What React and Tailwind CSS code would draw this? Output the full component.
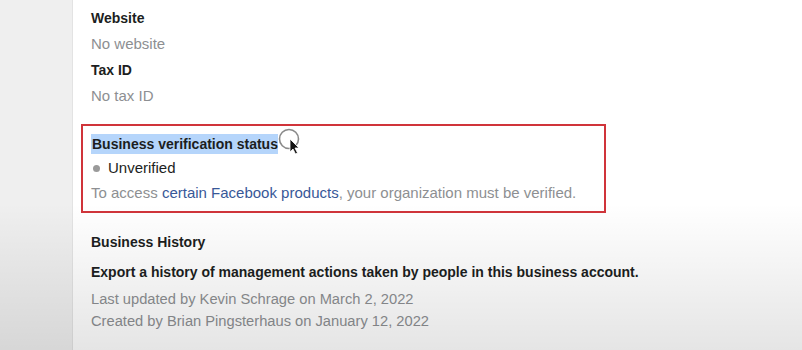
import React from "react";

function Cursor() {
    return (
        <svg
            width="30"
            height="34"
            viewBox="0 0 30 34"
            className="absolute left-[277px] top-[127px]"
        >
            <circle cx="12" cy="12" r="9.5" fill="rgba(255,255,255,0.55)" stroke="#8a8a8a" strokeWidth="1.6" />
            <path d="M13 12 L13 25 L16 22 L18.5 27 L20.5 26 L18 21 L22 21 Z" fill="#111" stroke="#fff" strokeWidth="0.8" />
        </svg>
    );
}

export default function App() {
    return (
        <div className="relative flex w-[802px] h-[350px] overflow-hidden bg-white font-['Liberation_Sans',Arial,sans-serif]">
            <div className="w-[73px] shrink-0 bg-[#efefef] border-r border-[#e3e3e3]" />

            <div className="flex-1 pl-[8px]">
                <div className="mt-[-21px] h-[26px] pl-[10px] flex items-center text-[15px] text-[#8d8f92]">
                    No phone number
                </div>
                <div className="h-[26px] pl-[10px] flex items-center text-[14px] font-bold text-[#1c1e21]">
                    Website
                </div>
                <div className="h-[26px] pl-[10px] flex items-center text-[15px] text-[#8d8f92]">
                    No website
                </div>
                <div className="h-[26px] pl-[10px] flex items-center text-[14px] font-bold text-[#1c1e21]">
                    Tax ID
                </div>
                <div className="h-[26px] pl-[10px] flex items-center text-[15px] text-[#8d8f92]">
                    No tax ID
                </div>

                <div className="mt-[15px] w-[525px] border-2 border-[#d0343a] pl-[8px] pt-[5px] pb-[5px]">
                    <div className="h-[25px] flex items-center">
                        <span className="bg-[#b5d5fb] text-[14px] font-bold text-[#1c1e21] leading-[20px] pl-[1px]">
                            Business verification status
                        </span>
                    </div>
                    <div className="h-[25px] flex items-center gap-[8px] text-[15px] text-[#1c1e21]">
                        <span className="ml-[2px] w-[7px] h-[7px] rounded-full bg-[#9a9a9a]" />
                        <span>Unverified</span>
                    </div>
                    <div className="h-[25px] flex items-center text-[15px] text-[#8d8f92]">
                        <span>
                            To access{" "}
                            <span className="text-[#385898]">
                                certain Facebook products
                            </span>
                            , your organization must be verified.
                        </span>
                    </div>
                </div>

                <div className="mt-[17px] pl-[10px] h-[25px] flex items-center text-[14px] font-bold text-[#1c1e21]">
                    Business History
                </div>
                <div className="mt-[5px] pl-[10px] h-[25px] flex items-center text-[14px] font-bold text-[#1c1e21]">
                    Export a history of management actions taken by people in this business account.
                </div>
                <div className="mt-[3px] pl-[10px] h-[22px] flex items-center text-[14.7px] text-[#8d8f92]">
                    Last updated by Kevin Schrage on March 2, 2022
                </div>
                <div className="pl-[10px] h-[22px] flex items-center text-[14.7px] text-[#8d8f92]">
                    Created by Brian Pingsterhaus on January 12, 2022
                </div>
            </div>

            <div className="pointer-events-none absolute inset-0 bg-gradient-to-b from-transparent from-[58%] to-[rgba(0,0,0,0.1)]" />
            <Cursor />
        </div>
    );
}
